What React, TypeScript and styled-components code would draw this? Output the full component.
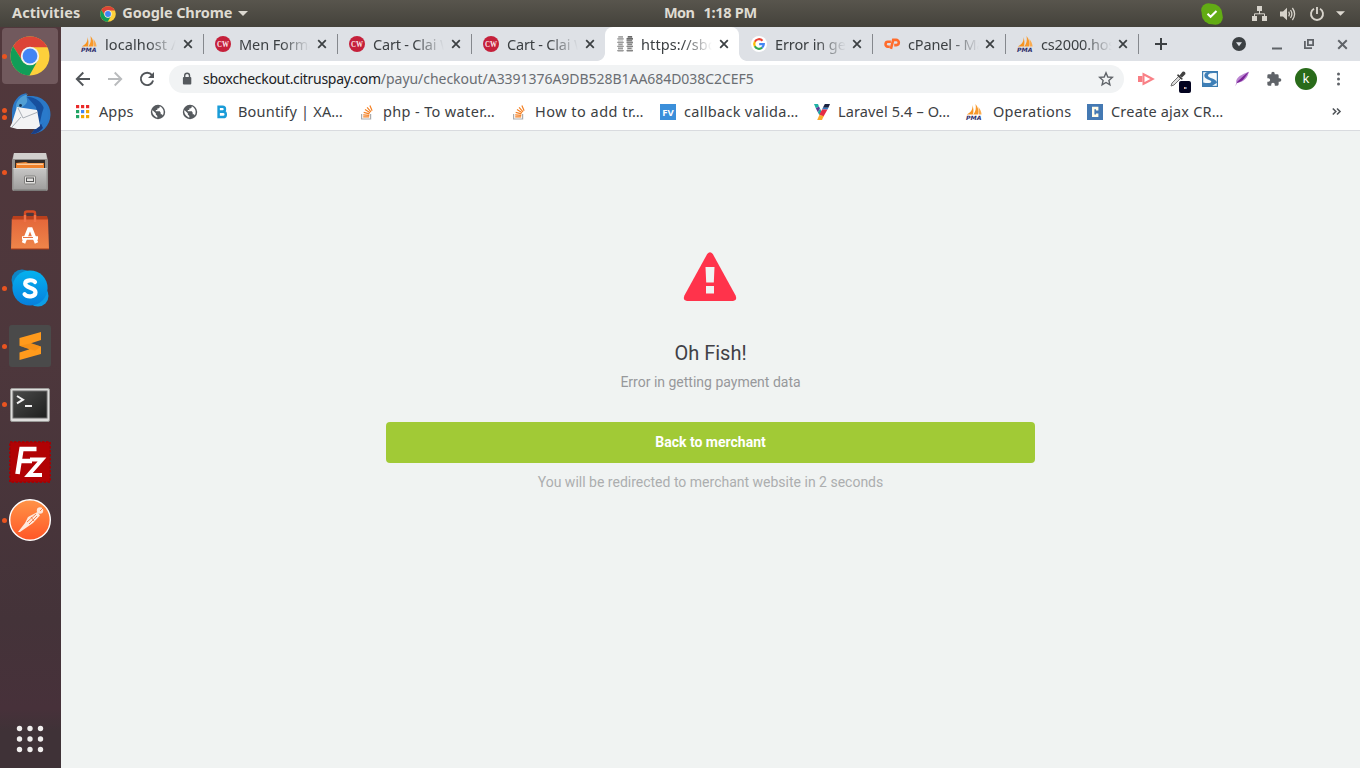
import React from 'react';
import styled, { createGlobalStyle } from 'styled-components';

const GlobalStyle = createGlobalStyle`
  * { box-sizing: border-box; }
  body { margin: 0; overflow: hidden; }
`;

const uiFont = '"Noto Sans", sans-serif';

/* ---------- desktop shell ---------- */

const Desktop = styled.div`
  width: 1360px;
  height: 768px;
  display: flex;
  flex-direction: column;
  font-family: ${uiFont};
  font-size: 14.5px;
  color: #3c4043;
`;

const Icon = styled.svg`
  display: block;
  flex: none;
  overflow: visible;
`;

const Label = styled.span<{ $spacing?: number }>`
  white-space: pre;
  padding-bottom: 2px;
  letter-spacing: ${p => p.$spacing ?? 0}px;
`;

const TopBar = styled.header`
  height: 27px;
  flex: none;
  display: grid;
  grid-template-columns: 664px 1fr auto;
  background: linear-gradient(#58554d, #44423b);
  color: #dfdbd2;
  font-weight: 700;
  line-height: 25px;
`;

const TopGroup = styled.div<{ $left?: number; $gap?: number }>`
  display: flex;
  align-items: center;
  padding-left: ${p => p.$left ?? 0}px;
  gap: ${p => p.$gap ?? 0}px;
`;

const AppMenu = styled.div`
  display: flex;
  align-items: center;
  gap: 6px;
  margin-left: 20px;
`;

const StatusTray = styled.div`
  display: flex;
  align-items: center;
  padding-right: 15px;
`;

const TrayItem = styled.div<{ $gap: number }>`
  margin-right: ${p => p.$gap}px;
`;

const Body = styled.div`
  flex: 1;
  min-height: 0;
  display: flex;
`;

/* ---------- dock ---------- */

const Dock = styled.nav`
  width: 61px;
  flex: none;
  display: flex;
  flex-direction: column;
  gap: 2px;
  padding: 1px 3px 0 2px;
  background: linear-gradient(#51383c, #4d373c 45%, #443339 80%, #47313a 92%, #3f3237 95%);
`;

const DockItem = styled.div<{ $active?: boolean }>`
  position: relative;
  width: 56px;
  height: 56px;
  display: flex;
  align-items: center;
  justify-content: center;
  border-radius: 4px;
  background: ${p => (p.$active ? '#71595d' : 'transparent')};
`;

const RunningDots = styled.div`
  position: absolute;
  left: 0;
  top: 0;
  height: 100%;
  display: flex;
  flex-direction: column;
  justify-content: center;
  gap: 2px;
`;

const RunningDot = styled.i`
  width: 5px;
  height: 5px;
  border-radius: 50%;
  background: #e95420;
`;

const AppsButton = styled.div`
  margin-top: auto;
  height: 58px;
  display: flex;
  justify-content: center;
`;

/* ---------- browser ---------- */

const Browser = styled.main`
  flex: 1;
  min-width: 0;
  display: flex;
  flex-direction: column;
  background: #fff;
`;

const TabStrip = styled.div`
  height: 34px;
  flex: none;
  display: flex;
  background: #dee1e6;
  padding-left: 8px;
`;

const TabBox = styled.div<{ $active?: boolean; $width: number; $divider?: boolean }>`
  position: relative;
  width: ${p => p.$width}px;
  height: 34px;
  display: flex;
  align-items: center;
  background: ${p => (p.$active ? '#fff' : 'transparent')};
  border-radius: 8px 8px 0 0;
  flex: none;
  &::before {
    content: '';
    width: 1px;
    height: 20px;
    margin-right: 11px;
    background: ${p => (p.$divider ? '#85888d' : 'transparent')};
  }
`;

const TabFoot = styled.i<{ $side: 'left' | 'right' }>`
  position: absolute;
  bottom: 0;
  ${p => p.$side}: -8px;
  width: 8px;
  height: 8px;
  background: radial-gradient(circle at ${p => (p.$side === 'left' ? '0 0' : '100% 0')}, transparent 7.5px, #fff 8.2px);
`;

const TabTitle = styled.span<{ $spacing: number }>`
  flex: 1;
  min-width: 0;
  margin: 0 6px 0 8px;
  overflow: hidden;
  white-space: pre;
  line-height: 22px;
  letter-spacing: ${p => p.$spacing}px;
  mask-image: linear-gradient(90deg, #000 42px, transparent 71px);
`;

const CloseSlot = styled.span`
  width: 8px;
  margin-right: 11px;
`;

const StripEnd = styled.div`
  flex: 1;
  display: flex;
  align-items: center;
  &::before {
    content: '';
    width: 1px;
    height: 20px;
    margin-right: 15px;
    background: #85888d;
  }
`;

const WindowButtons = styled.div`
  margin-left: auto;
  margin-right: 11px;
  display: flex;
  align-items: center;
`;

const Toolbar = styled.div`
  height: 36px;
  flex: none;
  display: flex;
  align-items: center;
  padding-left: 14px;
`;

const NavButtons = styled.div`
  display: flex;
  gap: 16px;
  width: 94px;
`;

const Omnibox = styled.div`
  width: 955px;
  height: 28px;
  border-radius: 14px;
  background: #f1f3f4;
  display: flex;
  align-items: center;
  padding: 0 10px 0 12px;
  font-size: 14px;
  color: #6a6e73;
`;

const Host = styled(Label)`
  color: #202124;
  margin-left: 10px;
`;

const StarSlot = styled.div`
  margin-left: auto;
`;

const Extensions = styled.div`
  display: flex;
  align-items: center;
  margin-left: 14px;
  gap: 16px;
`;

const Avatar = styled.div`
  width: 22px;
  height: 22px;
  border-radius: 50%;
  background: #296b1a;
  color: #fff;
  font-size: 13px;
  line-height: 21px;
  text-align: center;
  margin: 0 -3px 0 -3px;
`;

const BookmarkBar = styled.div`
  height: 34px;
  flex: none;
  display: flex;
  align-items: center;
  padding: 0 0 4px 14px;
  border-bottom: 1px solid #d9dbdf;
`;

const Bookmark = styled.div<{ $width: number; $gap?: number }>`
  display: flex;
  align-items: center;
  gap: ${p => p.$gap ?? 8}px;
  width: ${p => p.$width}px;
  line-height: 20px;
  flex: none;
`;

const More = styled.span`
  margin-left: auto;
  margin-right: 19px;
`;

/* ---------- page ---------- */

const Page = styled.section`
  flex: 1;
  background: #f0f3f2;
  display: flex;
  flex-direction: column;
  align-items: center;
  padding-top: 121px;
  font-family: Roboto, sans-serif;
  font-size: 14px;
`;

const Heading = styled.h1`
  margin: 38px 0 0;
  font-size: 20px;
  line-height: 26px;
  font-weight: 400;
  color: #414146;
`;

const Message = styled.p`
  margin: 6px 0 0;
  line-height: 20px;
  color: #97989b;
`;

const MerchantButton = styled.button`
  margin-top: 30px;
  width: 649px;
  height: 41px;
  padding: 0 0 2px;
  border: 0;
  border-radius: 4px;
  background: #a1ca36;
  color: #fff;
  font: 700 14px Roboto, sans-serif;
`;

const Redirect = styled.p`
  margin: 9px 0 0;
  line-height: 20px;
  color: #acaeaf;
`;

/* ---------- icons ---------- */

const ChromeLogo = ({ size }: { size: number }) => (
  <Icon width={size} height={size} viewBox="0 0 40 40">
    <circle cx="20" cy="20" r="19.5" fill="#fdd03b" />
    <path d="M3.1 10.3A19.5 19.5 0 0 1 36.9 10.3L37.1 11.2H20A9 9 0 0 0 12.2 24.5Z" fill="#dc4437" />
    <path d="M3.1 10.3A19.5 19.5 0 0 0 19.4 39.5L27.8 24.5A9 9 0 0 1 12.2 24.5Z" fill="#119d58" />
    <circle cx="20" cy="20" r="9.2" fill="#f1f1f1" />
    <circle cx="20" cy="20" r="7.4" fill="#4285f4" />
  </Icon>
);

const PmaIcon = () => (
  <Icon width="16" height="16" viewBox="0 0 16 16">
    <path d="M6.3 1C7 5 5.5 8 .8 10.5H6.8C7.8 8 7.7 4 6.3 1Z" fill="#f79421" />
    <path d="M9.5 0C12.3 3.2 13 7 12.2 10.5H7.2C9.8 7.5 10.3 4 9.5 0Z" fill="#f8982a" />
    <path d="M12.5 3C14.4 5.5 15.4 8 15.6 10.5H12.8Z" fill="#f9ab50" />
    <text x="0" y="15.8" textLength="15.5" lengthAdjust="spacingAndGlyphs" fontFamily="DejaVu Sans" fontSize="6" fontWeight="700" fontStyle="italic" fill="#2e2d6b">PMA</text>
  </Icon>
);

const CwIcon = () => (
  <Icon width="16" height="16" viewBox="0 0 16 16">
    <circle cx="8" cy="8" r="8" fill="#c5203b" />
    <text x="8" y="10.5" textAnchor="middle" textLength="12" lengthAdjust="spacingAndGlyphs" fontFamily="Liberation Serif" fontSize="7.4" fontWeight="700" fill="#fbe6ea">CW</text>
  </Icon>
);

const StripesIcon = () => (
  <Icon width="16" height="16" viewBox="0 0 16 16">
    <path fill="#d6d6d6" d="M1 0H6V16H1ZM10 0H15.500V16H10Z" />
    <g fill="none" strokeWidth="1.3">
      <path stroke="#9b9b9b" d="M1.5 .8H6M.2 2.8H6.8M.2 6.3H6.8M1.5 8.3H5.5M.2 10.3H6.8M1 12.3H6M.2 14.6H6.8" />
      <path stroke="#454545" d="M11 .8H15M9.5 2.8H16" />
      <path stroke="#858585" d="M9.5 4.5H15M9.5 6.5H16M10.5 8.3H15M9.5 10.3H16M10.5 12.3H14.5M9.5 14.6H16" />
    </g>
  </Icon>
);

const GoogleIcon = () => (
  <Icon width="16" height="16" viewBox="0 0 16 16">
    <circle cx="8" cy="8" r="8" fill="#fff" />
    <g fill="none" strokeWidth="2.2">
      <path stroke="#ea4335" d="M11.500 4.700A4.800 4.800 0 0 0 3.800 5.700" />
      <path stroke="#fbbc05" d="M3.900 5.600A4.800 4.800 0 0 0 3.900 10.400" />
      <path stroke="#34a853" d="M3.800 10.300A4.800 4.800 0 0 0 11.100 11.700" />
      <path stroke="#4285f4" d="M8.200 8.100H12.800A4.800 4.800 0 0 1 11.100 11.700" />
    </g>
  </Icon>
);

const CpanelIcon = () => (
  <Icon width="16" height="16" viewBox="0 0 16 16" fill="none" stroke="#ff6c2c" strokeWidth="2.6">
    <path d="M6.900 5.800H4.200A2.450 2.450 0 0 0 3.800 10.700H5.800" />
    <path d="M6.900 12.800L9.200 3.900H12.100A2.600 2.600 0 0 1 12.300 9.100H10.200" />
  </Icon>
);

const CloseIcon = ({ color = '#3c4043', size = 8 }: { color?: string; size?: number }) => (
  <Icon width={size} height={size} viewBox="0 0 8 8" stroke={color} strokeWidth="1.75">
    <path d="M.2 .2L7.8 7.8M7.8 .2L.2 7.8" />
  </Icon>
);

const GlobeIcon = () => (
  <Icon width="16" height="16" viewBox="0 0 16 16">
    <circle cx="8" cy="8" r="7.2" fill="#565a5e" />
    <path d="M2.200 6.600C2 10 4.500 12.800 7.300 13.700V12L5.800 10.500V9.300L2.900 6.600Z" fill="#fff" />
    <path d="M9.700 2.300V3.600L8.300 4.500H7.300V6H5.800V7.300H9.800L10.700 8.700V10.300H12L12.800 11.400C14.500 8.300 13.800 4.200 9.700 2.300Z" fill="#fff" />
  </Icon>
);

const StackIcon = () => (
  <Icon width="16" height="16" viewBox="0 0 16 16" fill="none">
    <path d="M2.600 10V15H11.600V10" stroke="#aaacae" strokeWidth="1.2" />
    <path d="M4.200 12.900H10.200M4.200 10.800L10.300 11.400M4.700 8.300L10.500 9.900M6 5.600L11.100 8.700M8.100 3.300L12 7.800M10.900 1.400L13.100 6.800" stroke="#f48024" strokeWidth="1.2" />
  </Icon>
);

const BIcon = () => (
  <Icon width="16" height="16" viewBox="0 0 16 16" fill="none" stroke="#1a9cd8" strokeWidth="2.5">
    <path d="M4.200 2.800H8.600A2.300 2.300 0 0 1 8.600 7.500H4.600M4.600 7.700H9.100A2.700 2.700 0 0 1 9.100 13.100H4.200M4.600 1.600V14.300" />
  </Icon>
);

const FvIcon = () => (
  <Icon width="16" height="16" viewBox="0 0 16 16">
    <path fill="#3b8fda" d="M0 0H16V16H0Z" />
    <text x="8" y="11.7" textAnchor="middle" textLength="11.5" lengthAdjust="spacingAndGlyphs" fontFamily="Open Sans" fontSize="9.5" fontWeight="700" fill="#fff">FV</text>
  </Icon>
);

const YIcon = () => (
  <Icon width="17" height="16" viewBox="0 0 17 16">
    <path d="M0 0H4L5 2.400L1.800 4.200Z" fill="#1fb2a5" />
    <path d="M1.800 4.200L5 2.400L6 4.500L3.800 8.200Z" fill="#5b3c96" />
    <path d="M3.800 8.200L6 4.500L7.600 7.700L5.300 11Z" fill="#1fa3a5" />
    <path d="M10.800 0H16L14.400 3.800H8.900Z" fill="#1c2340" />
    <path d="M8.900 3.800H14.400L13.500 5.500H8Z" fill="#2c7cc8" />
    <path d="M8 5.500H13.500L9.500 12.500L5.300 11Z" fill="#e52b46" />
    <path d="M5.400 11L9.800 12L8 16H3.200Z" fill="#fbaa2c" />
  </Icon>
);

const CIcon = () => (
  <Icon width="16" height="16" viewBox="0 0 16 16">
    <path fill="#4479b3" d="M0 0H16V16H0Z" />
    <path d="M10.200 6.400V4H6.200V11.700H10.200V9.400" fill="none" stroke="#fffbe8" strokeWidth="2.4" />
  </Icon>
);

const AppsGrid = () => (
  <Icon width="16" height="16" viewBox="0 0 16 16">
    {['#ea2a2a', '#ea2a2a', '#ea2a2a', '#21a464', '#4285f4', '#f2a600', '#21a464', '#f2a600', '#f2a600'].map((c, i) => (
      <rect key={i} x={1 + (i % 3) * 5} y={1 + Math.floor(i / 3) * 5} width="3.200" height="3.200" fill={c} />
    ))}
  </Icon>
);

const Caret = ({ w = 10 }: { w?: number }) => (
  <Icon width={w} height="5" viewBox="0 0 10 5"><path d="M0 0H10L5 5Z" fill="#dcd8d0" /></Icon>
);

/* ---------- dock icons ---------- */

const ThunderbirdIcon = () => (
  <Icon width="42" height="42" viewBox="0 0 42 42">
    <path d="M3 20C3 8 10 1 18 0C16 2 17 3 20 3C33 2 42 11 41.500 22C41 33 33 41 22 41L26 36H10L3 30Z" fill="#2b78c6" />
    <path d="M18 4C29 4 37 12 36 24L31 36L27 14Z" fill="#17509e" />
    <path d="M36 11C40 18 41 28 34 35L36 28L30 34L33 20Z" fill="#2a7acb" />
    <path d="M34 35C30 39 27 41 22 41L26 36L32 31Z" fill="#1a3f86" />
    <path d="M7 16C6 9 11 3 19 1C16 4 19 6 18 9C16 13 12 15 7 16Z" fill="#519fd4" />
    <path d="M8 14L28 17L31 33L27 36L8 36L1 34L3 30Z" fill="#f3f3f4" />
    <path d="M9 15L14 25L29 19M3 34L12 24" fill="none" stroke="#a9aeb5" strokeWidth="1" />
    <circle cx="11.500" cy="12.500" r="1.400" fill="#183354" />
  </Icon>
);

const FilesIcon = () => (
  <Icon width="38" height="40" viewBox="0 0 38 40">
    <defs>
      <linearGradient id="cabinet" x1="0" y1="0" x2="0" y2="1"><stop offset="0" stopColor="#c8c7c6" /><stop offset="1" stopColor="#a09f9e" /></linearGradient>
    </defs>
    <path d="M3 1H35L37 8V37Q37 39 35 39H3Q1 39 1 37V8Z" fill="#93918f" />
    <path d="M3 1H35L36 7H2Z" fill="#d0cfcd" />
    <path d="M4 8H34V16H4Z" fill="#352c29" />
    <path d="M5 11L15 10L17 11H33V17H5Z" fill="#f0812b" />
    <path d="M6 12.200H32" stroke="#fff0d7" />
    <path d="M2.500 16H35.500V37H2.500Z" fill="url(#cabinet)" />
    <path d="M2.500 16.500H35.500" stroke="#d8d7d5" />
    <rect x="13.500" y="24" width="11" height="8" rx="1" fill="#e2e1df" stroke="#81807e" />
    <rect x="15.500" y="26" width="7" height="3.500" fill="none" stroke="#555" />
    <path d="M3 38.300H35" stroke="#767573" />
  </Icon>
);

const SoftwareIcon = () => (
  <Icon width="38" height="42" viewBox="0 0 38 42">
    <defs><linearGradient id="bag" x1="0" y1="0" x2="0" y2="1"><stop offset="0" stopColor="#e4673a" /><stop offset="1" stopColor="#ee854a" /></linearGradient></defs>
    <path d="M14 10V4Q14 2.500 16 2.500H22Q24 2.500 24 4V10" fill="none" stroke="#d64c24" strokeWidth="2.400" />
    <path d="M.800 10H37L38 40H0Z" fill="url(#bag)" />
    <path d="M2 7H36L37.200 10.500H.800Z" fill="#b9401d" />
    <path d="M14 6V13M24 6V13" stroke="#ee7248" strokeWidth="2.400" />
    <path d="M0 40H38" stroke="#a63b19" />
    <path d="M12.500 34L18 20H20L25.500 34" fill="none" stroke="#fff" strokeWidth="3.600" />
    <path d="M11 29H27" stroke="#fff" strokeWidth="3.500" />
    <path d="M12 28.500H22" stroke="#ea743f" strokeWidth="1" />
  </Icon>
);

const SkypeIcon = () => (
  <Icon width="38" height="38" viewBox="0 0 38 38">
    <defs><linearGradient id="sky" x1="0" y1="0" x2="0" y2="1"><stop offset="0" stopColor="#05b2ef" /><stop offset="1" stopColor="#067fdc" /></linearGradient></defs>
    <circle cx="11" cy="11" r="10.500" fill="#0e84c4" />
    <circle cx="27" cy="27" r="10.500" fill="#0d9de5" />
    <circle cx="19" cy="19" r="17.600" fill="url(#sky)" />
    <path d="M24 13C22.300 10.700 14.200 10.200 14.200 14.800C14.200 19.500 24.500 17.800 24.500 23.300C24.500 28.300 16 28.300 13.600 25.200" fill="none" stroke="#fff" strokeWidth="4.200" strokeLinecap="round" />
  </Icon>
);

const SublimeIcon = () => (
  <Icon width="42" height="42" viewBox="0 0 42 42">
    <rect width="42" height="42" rx="3" fill="#4a4a4a" />
    <path d="M10.500 13L32 7V15L22 18.300L32 21.500V29L10.500 35V27.500L20.500 24.200L10.500 20.800Z" fill="#ff9a1c" />
    <path d="M10.500 20.800L22 18.300L32 21.500L26 25.800Z" fill="#e88512" opacity=".45" />
  </Icon>
);

const TerminalIcon = () => (
  <Icon width="40" height="34" viewBox="0 0 40 34">
    <defs><linearGradient id="screen" x1="0" y1="0" x2="1" y2="1"><stop offset="0" stopColor="#4a4b4a" /><stop offset="1" stopColor="#1e1f1e" /></linearGradient></defs>
    <rect x=".5" y="1.500" width="39" height="33" rx="1.500" fill="#dededc" stroke="#9b9a98" />
    <rect x="3" y="4" width="34" height="27" fill="url(#screen)" stroke="#6b6b6a" />
    <path d="M7 9L13 12.700L7 16.400" fill="none" stroke="#f2f2f2" strokeWidth="2" />
    <path d="M15 19H22" stroke="#f2f2f2" strokeWidth="2" />
  </Icon>
);

const FilezillaIcon = () => (
  <Icon width="42" height="42" viewBox="0 0 42 42">
    <rect x="1" y="1" width="40" height="40" fill="#b10204" stroke="#a10305" strokeWidth="2" strokeDasharray="2.500 1.500" />
    <path d="M8.500 33L12.500 8H27.500M10.500 20H23" fill="none" stroke="#fff" strokeWidth="4.600" />
    <path d="M21 18.500H33L19.500 34H33" fill="none" stroke="#fff" strokeWidth="4" />
  </Icon>
);

const PostmanIcon = () => (
  <Icon width="42" height="42" viewBox="0 0 42 42">
    <defs><linearGradient id="post" x1="0" y1="0" x2="0" y2="1"><stop offset="0" stopColor="#ff9448" /><stop offset="1" stopColor="#ff5626" /></linearGradient></defs>
    <circle cx="21" cy="21" r="20.300" fill="url(#post)" stroke="#fff" strokeWidth="1.400" />
    <circle cx="31" cy="11.500" r="3.200" fill="#ffe6d8" />
    <path d="M28.500 13L31 16.500L24 24L19 27.500L11 33L9 33L16 24L19 18Z" fill="#ffe9dc" />
    <path d="M18 23L27 15M20 25L28 17M22 18L25 22M31 12L34 9" stroke="#f37840" strokeWidth=".9" />
  </Icon>
);

/* ---------- data ---------- */

const dock = [
  { id: 'chrome', icon: <ChromeLogo size={40} />, dots: 1, active: true },
  { id: 'mail', icon: <ThunderbirdIcon />, dots: 2 },
  { id: 'files', icon: <FilesIcon />, dots: 1 },
  { id: 'software', icon: <SoftwareIcon />, dots: 0 },
  { id: 'skype', icon: <SkypeIcon />, dots: 1 },
  { id: 'sublime', icon: <SublimeIcon />, dots: 1 },
  { id: 'terminal', icon: <TerminalIcon />, dots: 1 },
  { id: 'filezilla', icon: <FilezillaIcon />, dots: 0 },
  { id: 'postman', icon: <PostmanIcon />, dots: 1 },
];

const tabs = [
  { icon: <PmaIcon />, title: 'localhost / 1', spacing: 0.1, width: 134 },
  { icon: <CwIcon />, title: 'Men Forma', spacing: -0.1, width: 134, divider: true },
  { icon: <CwIcon />, title: 'Cart - Clai W', spacing: -0.2, width: 134, divider: true },
  { icon: <CwIcon />, title: 'Cart - Clai W', spacing: -0.2, width: 134, divider: true },
  { icon: <StripesIcon />, title: 'https://sbo', spacing: 0.1, width: 134, active: true },
  { icon: <GoogleIcon />, title: 'Error in get', spacing: -0.1, width: 133 },
  { icon: <CpanelIcon />, title: 'cPanel - Ma', spacing: -0.15, width: 133, divider: true },
  { icon: <PmaIcon />, title: 'cs2000.hos', spacing: -0.15, width: 133, divider: true },
];

const bookmarks = [
  { icon: <AppsGrid />, title: 'Apps', spacing: 0.1, width: 75 },
  { icon: <GlobeIcon />, title: '', spacing: 0, width: 32 },
  { icon: <GlobeIcon />, title: '', spacing: 0, width: 32 },
  { icon: <BIcon />, title: 'Bountify | XA…', spacing: 0.2, width: 145 },
  { icon: <StackIcon />, title: 'php - To water…', spacing: 0.36, width: 152 },
  { icon: <StackIcon />, title: 'How to add tr…', spacing: 0.48, width: 149 },
  { icon: <FvIcon />, title: 'callback valida…', spacing: 0.3, width: 154 },
  { icon: <YIcon />, title: 'Laravel 5.4 – O…', spacing: 0.13, width: 152, gap: 7 },
  { icon: <PmaIcon />, title: 'Operations', spacing: 0.25, width: 121, gap: 11 },
  { icon: <CIcon />, title: 'Create ajax CR…', spacing: 0.2, width: 160 },
];

export default function App() {
  return (
    <Desktop>
      <GlobalStyle />
      <TopBar>
        <TopGroup $left={12}>
          <Label $spacing={0.1}>Activities</Label>
          <AppMenu>
            <ChromeLogo size={16} />
            <Label $spacing={-0.1}>Google Chrome</Label>
            <Caret />
          </AppMenu>
        </TopGroup>
        <TopGroup $gap={9}>
          <Label $spacing={-0.6}>Mon</Label>
          <Label $spacing={-0.25}>1:18 PM</Label>
        </TopGroup>
        <StatusTray>
          <TrayItem $gap={29}>
            <Icon width="22" height="22" viewBox="0 0 22 22">
              <circle cx="7.500" cy="7.500" r="7.300" fill="#62ac14" />
              <circle cx="14.500" cy="14.500" r="7.300" fill="#62ac14" />
              <circle cx="11" cy="11" r="10.300" fill="#62ac14" />
              <path d="M6.500 10.800L9.600 13.800L15.500 8" fill="none" stroke="#fff" strokeWidth="2.100" />
            </Icon>
          </TrayItem>
          <TrayItem $gap={13}>
            <Icon width="15" height="15" viewBox="0 0 15 15">
              <path d="M5 0H10V5H5ZM0 10H5V15H0ZM10 10H15V15H10Z" fill="#d7d3cb" />
              <path d="M7.500 5V8M2.500 10.500V7.800H12.500V10.500" fill="none" stroke="#d7d3cb" />
            </Icon>
          </TrayItem>
          <TrayItem $gap={14}>
            <Icon width="16" height="14" viewBox="0 0 16 14">
              <path d="M0 4.500H3L7 .8V13.200L3 9.500H0Z" fill="#d7d3cb" />
              <path d="M8.700 4.700Q10.300 7 8.700 9.300M10.500 3Q13.300 7 10.500 11M12.400 1Q16.800 7 12.400 13" fill="none" stroke="#d7d3cb" strokeWidth="1.300" />
            </Icon>
          </TrayItem>
          <TrayItem $gap={12}>
            <Icon width="14" height="14" viewBox="0 0 14 14">
              <path d="M4 1.800A6 6 0 1 0 10 1.800M7 0V7" fill="none" stroke="#d7d3cb" strokeWidth="1.900" />
            </Icon>
          </TrayItem>
          <Caret w={9} />
        </StatusTray>
      </TopBar>
      <Body>
        <Dock>
          {dock.map(d => (
            <DockItem key={d.id} $active={d.active}>
              <RunningDots>{Array.from({ length: d.dots }, (_, i) => <RunningDot key={i} />)}</RunningDots>
              {d.icon}
            </DockItem>
          ))}
          <AppsButton>
            <Icon width="56" height="56" viewBox="0 0 56 56" fill="#f1efee">
              {[0, 1, 2].map(r => [0, 1, 2].map(c => <circle key={`${r}${c}`} cx={17.5 + c * 10.5} cy={18.5 + r * 10.5} r="2.700" />))}
            </Icon>
          </AppsButton>
        </Dock>
        <Browser>
          <TabStrip>
            {tabs.map((t, i) => (
              <TabBox key={i} $active={t.active} $width={t.width} $divider={t.divider}>
                {t.active && <><TabFoot $side="left" /><TabFoot $side="right" /></>}
                {t.icon}
                <TabTitle $spacing={t.spacing}>{t.title}</TabTitle>
                <CloseSlot><CloseIcon /></CloseSlot>
              </TabBox>
            ))}
            <StripEnd>
              <Icon width="14" height="14" viewBox="0 0 14 14" stroke="#3c4043" strokeWidth="2"><path d="M1 7H13M7 1V13" /></Icon>
              <WindowButtons>
                <TrayItem $gap={26}>
                  <Icon width="14" height="14" viewBox="0 0 14 14"><circle cx="7" cy="7" r="7" fill="#3c4043" /><path d="M4 5.300H10L7 9.300Z" fill="#dee1e6" /></Icon>
                </TrayItem>
                <TrayItem $gap={22}>
                  <Icon width="10" height="10" viewBox="0 0 10 10"><path d="M0 8.500H10V10.500H0Z" fill="#5f6368" /></Icon>
                </TrayItem>
                <TrayItem $gap={24}>
                  <Icon width="10" height="10" viewBox="0 0 10 10" fill="none" stroke="#5f6368" strokeWidth="1.800"><path d="M3.900 .9H9.100V6.100H3.900ZM.9 2V9.100H8" /></Icon>
                </TrayItem>
                <TrayItem $gap={2}><CloseIcon color="#5f6368" size={9} /></TrayItem>
              </WindowButtons>
            </StripEnd>
          </TabStrip>
          <Toolbar>
            <NavButtons>
              <Icon width="16" height="16" viewBox="0 0 16 16" fill="none" stroke="#515559" strokeWidth="1.900"><path d="M15 8H2M8.300 1.500L1.800 8L8.300 14.500" /></Icon>
              <Icon width="16" height="16" viewBox="0 0 16 16" fill="none" stroke="#b9bbbd" strokeWidth="1.900"><path d="M1 8H14M7.700 1.500L14.200 8L7.700 14.500" /></Icon>
              <Icon width="16" height="16" viewBox="0 0 16 16"><path d="M13 4.100A6.200 6.200 0 1 0 14.100 9.500" fill="none" stroke="#515559" strokeWidth="1.900" /><path d="M15 1V7H9Z" fill="#515559" /></Icon>
            </NavButtons>
            <Omnibox>
              <Icon width="12" height="14" viewBox="0 0 12 14"><rect x="1.900" y="5" width="8.400" height="7.400" rx="1" fill="#55595d" /><path d="M3.700 6V3.600A2.400 2.400 0 0 1 8.500 3.600V6" fill="none" stroke="#55595d" strokeWidth="1.400" /></Icon>
              <Host $spacing={-0.3}>sboxcheckout.citruspay.com</Host>
              <Label $spacing={-0.04}>/payu/checkout/A3391376A9DB528B1AA684D038C2CEF5</Label>
              <StarSlot>
                <Icon width="16" height="16" viewBox="0 0 16 16" fill="none" stroke="#5f6368" strokeWidth="1.400"><path d="M8 1.800L9.800 6L14.300 6.400L10.900 9.400L11.900 13.900L8 11.500L4.100 13.900L5.100 9.400L1.700 6.400L6.200 6Z" /></Icon>
              </StarSlot>
            </Omnibox>
            <Extensions>
              <Icon width="16" height="16" viewBox="0 0 16 16">
                <path d="M0 5H4.500V11H0Z" fill="#f87d83" />
                <path d="M5.500 3.200V12.800L8 11.500L14.700 8L8 4.500Z" fill="none" stroke="#f98086" strokeWidth="2" />
              </Icon>
              <Icon width="16" height="16" viewBox="0 0 16 16">
                <path d="M1 15L2 12L9 5L11 7L4 14Z" fill="#dcdcdc" stroke="#737373" />
                <path d="M8 3L13 8L11.500 8.800L7 4.400ZM9.500 4.500L12.500 .8Q15.500 -.5 15.500 3L12 6.500Z" fill="#414141" />
                <rect x="9" y="10" width="12" height="12" rx="2" fill="#03031f" />
                <rect x="14" y="16" width="1.500" height="2" fill="#f5ad86" />
                <rect x="15.500" y="16" width="1" height="2" fill="#91c8f7" />
              </Icon>
              <Icon width="16" height="16" viewBox="0 0 16 16">
                <rect x=".6" y=".6" width="14.800" height="14.800" fill="#f5fafc" stroke="#3a7bb0" strokeWidth="1.200" />
                <path d="M15 2.300C11 1.800 6 2.200 6 4.700C6 7 14.800 7.600 15 11.700L10 15H1V11.500C6 12.500 9 12.200 9.300 10.700C9.500 9 2.300 8.800 2.300 4.600C2.300 2.500 4 1 6 1H15Z" fill="#3e7fb7" />
              </Icon>
              <Icon width="16" height="16" viewBox="0 0 16 16">
                <path d="M2.200 12C1.600 6 8 3.500 14.800 .8C14 6 10.500 11.500 2.200 12Z" fill="#bb86d2" />
                <path d="M.8 15.500L3.500 10.500C6.500 8 9 5.200 14.800 .8C11 6 10 10 3.200 12Z" fill="#7a2397" />
              </Icon>
              <Icon width="16" height="16" viewBox="0 0 24 24"><path d="M20.500 11H19V7a2 2 0 0 0-2-2h-4V3.500a2.500 2.500 0 0 0-5 0V5H4a2 2 0 0 0-2 2v3.800h1.500a2.700 2.700 0 0 1 0 5.400H2V20a2 2 0 0 0 2 2h3.800v-1.500a2.700 2.700 0 0 1 5.400 0V22H17a2 2 0 0 0 2-2v-4h1.500a2.500 2.500 0 0 0 0-5Z" fill="#5f6368" /></Icon>
              <Avatar>k</Avatar>
              <Icon width="16" height="16" viewBox="0 0 16 16" fill="#5f6368"><circle cx="8.500" cy="3" r="1.500" /><circle cx="8.500" cy="8" r="1.500" /><circle cx="8.500" cy="13" r="1.500" /></Icon>
            </Extensions>
          </Toolbar>
          <BookmarkBar>
            {bookmarks.map((b, i) => (
              <Bookmark key={i} $width={b.width} $gap={b.gap}>
                {b.icon}
                {b.title && <Label $spacing={b.spacing}>{b.title}</Label>}
              </Bookmark>
            ))}
            <More>
              <Icon width="9" height="7" viewBox="0 0 9 7" fill="none" stroke="#515559" strokeWidth="1.600"><path d="M.8 .5L3.800 3.500L.8 6.500M5 .5L8 3.500L5 6.500" /></Icon>
            </More>
          </BookmarkBar>
          <Page>
            <Icon width="55" height="50" viewBox="0 0 55 50">
              <path d="M24.200 2Q27 -1.500 29.800 2L52.600 43.500Q54.500 48.500 50 49H4Q-.5 48.500 1.400 43.500Z" fill="#ff334b" />
              <path d="M22.500 15H31.500L30.800 30.500H23.200ZM23 34H31V41.500H23Z" fill="#f0f3f2" />
            </Icon>
            <Heading>Oh Fish!</Heading>
            <Message>Error in getting payment data</Message>
            <MerchantButton>Back to merchant</MerchantButton>
            <Redirect>You will be redirected to merchant website in 2 seconds</Redirect>
          </Page>
        </Browser>
      </Body>
    </Desktop>
  );
}
